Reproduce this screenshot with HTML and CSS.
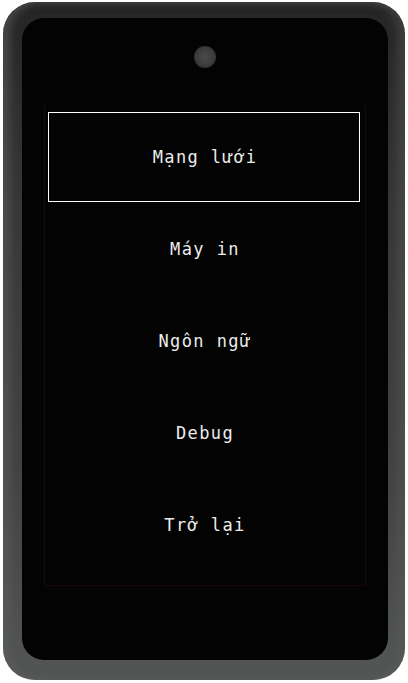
FILE: index.html
```html
<!DOCTYPE html>
<html lang="vi">
<head>
<meta charset="utf-8">
<title>Menu</title>
<link rel="stylesheet" href="styles.css">
</head>
<body>
<div class="device">
  <div class="screen">
    <div class="camera"></div>
    <div class="panel">
      <ul class="menu">
        <li class="item selected">Mạng lưới</li>
        <li class="item">Máy in</li>
        <li class="item">Ngôn ngữ</li>
        <li class="item">Debug</li>
        <li class="item">Trở lại</li>
      </ul>
    </div>
  </div>
</div>
</body>
</html>
```
FILE: styles.css
```css
html, body {
  margin: 0;
  padding: 0;
  background: #ffffff;
}
.device {
  box-sizing: border-box;
  width: 402px;
  height: 678px;
  margin: 2px 0 0 3px;
  padding: 16px 17px 20px 19px;
  border-radius: 32px;
  background: linear-gradient(180deg, #252525 0%, #363736 30%, #424442 70%, #535654 100%);
  box-shadow: inset 7px 0 8px rgba(95,97,95,0.55), inset -7px 0 8px rgba(95,97,95,0.4);
}
.screen {
  box-sizing: border-box;
  height: 100%;
  border-radius: 22px;
  background: #030303;
  display: flex;
  flex-direction: column;
  align-items: center;
  padding-top: 28px;
}
.camera {
  width: 22px;
  height: 22px;
  border-radius: 50%;
  background: radial-gradient(circle at 50% 50%, #4a4a4a 0%, #3c3c3c 55%, #222 100%);
}
.panel {
  box-sizing: border-box;
  width: 322px;
  margin-top: 36px;
  margin-left: 22px;
  padding: 7px 5px 13px 3px;
  border: 1px solid #1c0606;
  border-top-color: transparent;
  align-self: flex-start;
}
.menu {
  list-style: none;
  margin: 0;
  padding: 0;
}
.item {
  box-sizing: border-box;
  height: 90px;
  margin-bottom: 2px;
  display: flex;
  align-items: center;
  justify-content: center;
  color: #ececec;
  font-family: "DejaVu Sans Mono", "Liberation Mono", monospace;
  font-size: 17px;
  letter-spacing: 1.4px;
  padding-left: 2px;
  border: 1px solid transparent;
}
.item.selected {
  border-color: #ffffff;
}
```
